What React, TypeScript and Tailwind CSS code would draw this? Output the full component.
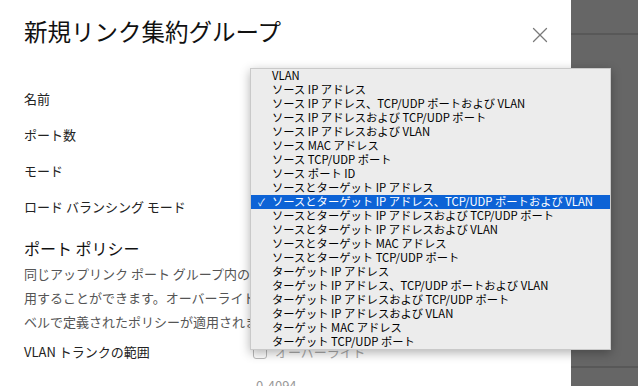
import { X } from 'lucide-react'

const FONT = { fontFamily: '"Noto Sans CJK JP", "Noto Sans", sans-serif' }

const options = [
  'VLAN',
  'ソース IP アドレス',
  'ソース IP アドレス、TCP/UDP ポートおよび VLAN',
  'ソース IP アドレスおよび TCP/UDP ポート',
  'ソース IP アドレスおよび VLAN',
  'ソース MAC アドレス',
  'ソース TCP/UDP ポート',
  'ソース ポート ID',
  'ソースとターゲット IP アドレス',
  'ソースとターゲット IP アドレス、TCP/UDP ポートおよび VLAN',
  'ソースとターゲット IP アドレスおよび TCP/UDP ポート',
  'ソースとターゲット IP アドレスおよび VLAN',
  'ソースとターゲット MAC アドレス',
  'ソースとターゲット TCP/UDP ポート',
  'ターゲット IP アドレス',
  'ターゲット IP アドレス、TCP/UDP ポートおよび VLAN',
  'ターゲット IP アドレスおよび TCP/UDP ポート',
  'ターゲット IP アドレスおよび VLAN',
  'ターゲット MAC アドレス',
  'ターゲット TCP/UDP ポート',
]

const selected = 9

function FormRow({ label, children }: { label: string; children?: React.ReactNode }) {
  return (
    <div className="flex h-9 items-center">
      <div className="w-[226px] shrink-0 text-[13px] text-[#222]">{label}</div>
      <div className="flex-1">{children}</div>
    </div>
  )
}

export default function App() {
  return (
    <div className="relative h-[386px] w-[638px] overflow-hidden bg-[#666666]" style={FONT}>
      {/* backdrop lines */}
      <div className="absolute left-0 right-0 top-[33px] h-[2px] bg-[#585858]" />
      <div className="absolute left-0 right-0 top-[366px] h-[2px] bg-[#585858]" />

      {/* Modal */}
      <div className="relative h-full w-[571px] bg-white px-6">
        <div className="flex h-16 items-center justify-between">
          <h1 className="text-[23.5px] leading-none text-[#111]">新規リンク集約グループ</h1>
          <X className="mr-[-6px] mt-[6px] h-[26px] w-[26px] text-[#7a7a7a]" strokeWidth={1.2} />
        </div>

        <div className="mt-[17px]">
          <FormRow label="名前">
            <div className="h-7 w-[280px] border border-[#ccc]" />
          </FormRow>
          <FormRow label="ポート数">
            <div className="h-7 w-[280px] border border-[#ccc]" />
          </FormRow>
          <FormRow label="モード">
            <div className="h-7 w-[280px] border border-[#ccc]" />
          </FormRow>
          <FormRow label="ロード バランシング モード">
            <div className="h-7 w-[280px] border border-[#ccc]" />
          </FormRow>
        </div>

        <h2 className="mt-[11px] text-[16px] leading-6 text-[#111]">ポート ポリシー</h2>
        <p className="mt-[2px] text-[13px] leading-6 text-[#555]">
          同じアップリンク ポート グループ内の個々のポートに、異なるポリシーを適
          <br />
          用することができます。オーバーライドされていない場合は、グループ レ
          <br />
          ベルで定義されたポリシーが適用されます。
        </p>

        <FormRow label="VLAN トランクの範囲">
          <div className="flex items-center gap-2 pl-[3px]">
            <div className="h-[14px] w-[14px] rounded-[3px] border border-[#bbb] bg-white" />
            <span className="text-[13px] text-[#aaa]">オーバーライド</span>
          </div>
        </FormRow>
        <div className="flex pl-[232px] pt-[6px] text-[13px] text-[#999]">0-4094</div>
      </div>

      {/* Dropdown menu */}
      <div className="absolute left-[250px] top-[68px] w-[361px] border border-[#c9c9c9] bg-[#ececec] shadow-[0_3px_10px_rgba(0,0,0,0.3)]">
        {options.map((opt, i) => (
          <div
            key={opt}
            className={
              i === selected
                ? 'flex h-[14px] items-center bg-[#0d63d6] text-[11.3px] leading-none text-white'
                : 'flex h-[14px] items-center text-[11.3px] leading-none text-black'
            }
          >
            <span className="w-[21px] shrink-0 pl-[7px] text-[10px]">{i === selected ? '✓' : ''}</span>
            <span className="whitespace-nowrap">{opt}</span>
          </div>
        ))}
      </div>
    </div>
  )
}
